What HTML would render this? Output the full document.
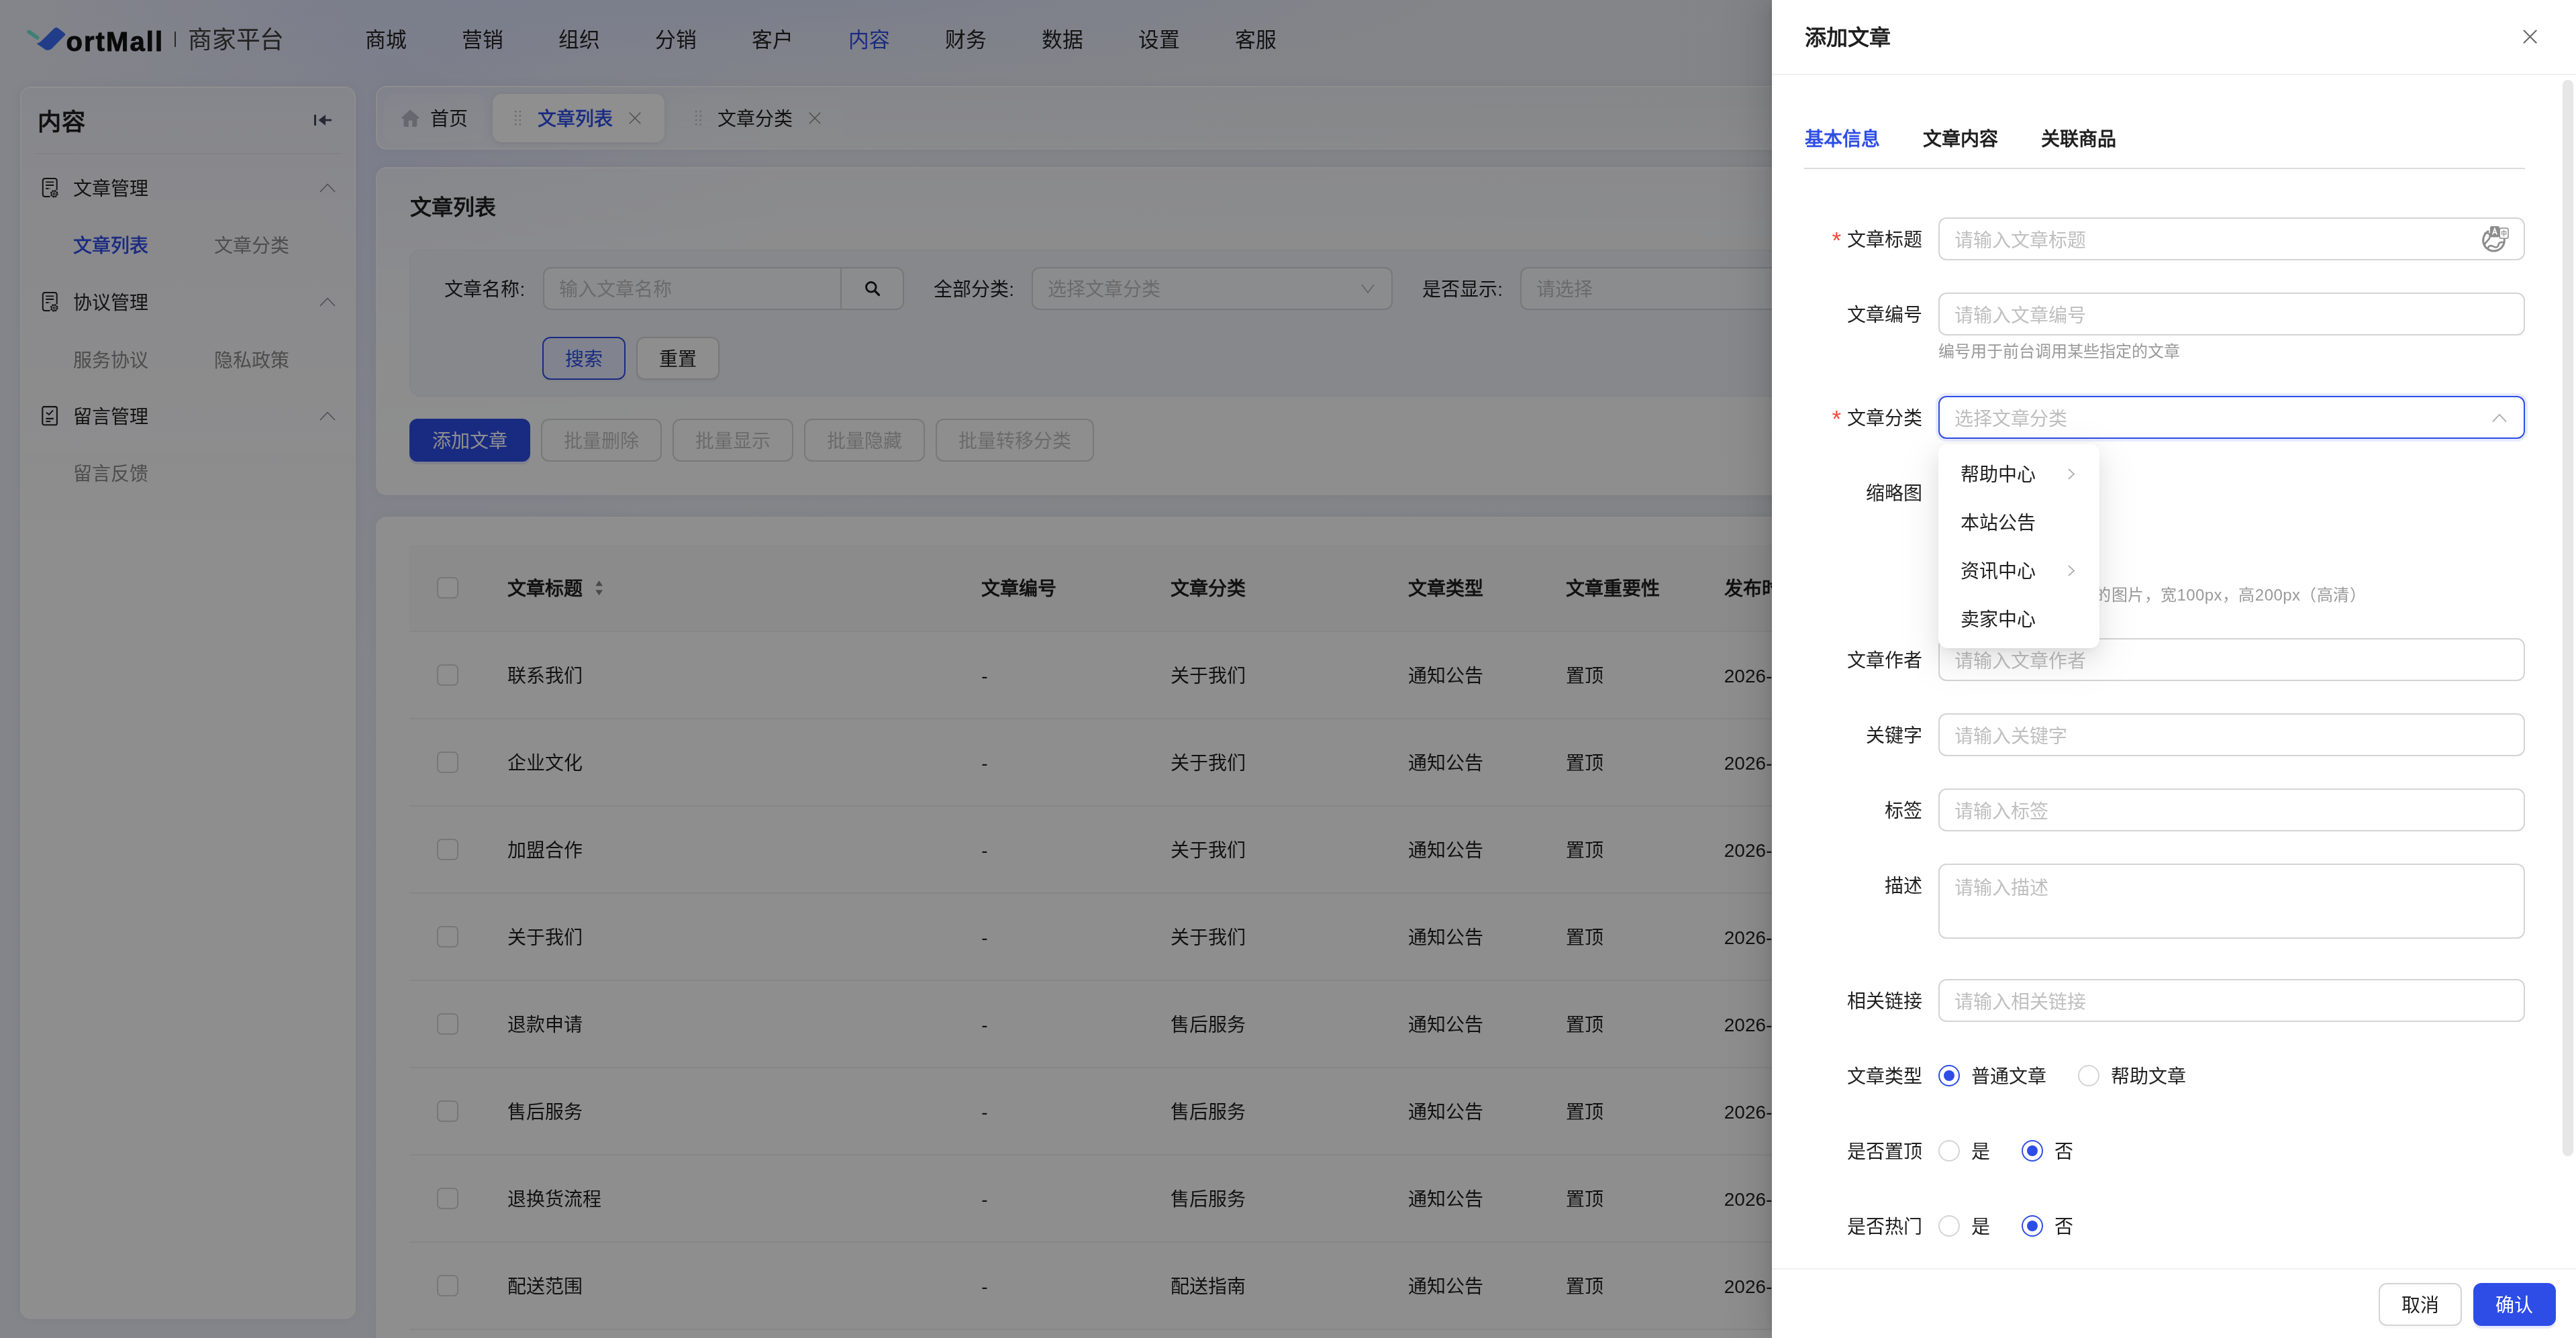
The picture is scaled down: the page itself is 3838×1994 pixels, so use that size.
<!DOCTYPE html>
<html lang="zh-CN"><head><meta charset="utf-8"><title>文章列表 - 商家平台</title>
<style>
html,body{margin:0;padding:0;}
body{width:3838px;height:1994px;overflow:hidden;background:#eceef6;}
#root{position:relative;width:1919px;height:997px;zoom:2;overflow:hidden;will-change:transform;
  font-family:"Liberation Sans",sans-serif;font-size:14px;color:#1f1f1f;
  background:
   radial-gradient(ellipse 560px 95px at 560px -18px, rgba(204,216,252,.62) 0%, rgba(210,220,252,.32) 55%, rgba(214,224,255,0) 100%),
   radial-gradient(ellipse 300px 385px at 290px 110px, rgba(206,216,250,.50) 0%, rgba(212,221,250,.24) 55%, rgba(214,224,255,0) 100%),
   linear-gradient(90deg,#ecedf7 0%,#ebedf5 38%,#e9ebee 100%);}
.t{position:absolute;white-space:nowrap;display:block;}
i{display:inline-block;width:1em;text-align:center;font-style:normal;letter-spacing:0;}
.ls i{margin-right:.22px;}
.b{position:absolute;box-sizing:border-box;}
svg{position:absolute;overflow:visible;}
.card{border-radius:8px;border:1px solid rgba(255,255,255,.72);box-shadow:0 0 9px rgba(20,30,70,.055);}
.inp{background:rgba(255,255,255,.5);border:1px solid #d6d6d6;border-radius:6px;}
.btn{border:1px solid #d6d6d6;border-radius:6px;background:rgba(255,255,255,.92);text-align:center;line-height:32px;font-size:14px;box-shadow:0 2px 0 rgba(0,0,0,.02);}
.btn.dis{color:#bfbfbf;background:transparent;box-shadow:none;}
.btn.pri{background:#2e4de6;border-color:#2e4de6;color:#fff;box-shadow:0 2px 0 rgba(46,77,230,.12);}
.cb{position:absolute;box-sizing:border-box;width:16px;height:16px;border:1px solid #d4d4d4;border-radius:3.5px;background:rgba(255,255,255,.9);}
.row{position:absolute;left:305px;right:0;height:1px;background:#efefef;}
#mask{position:absolute;left:0;top:0;width:1919px;height:997px;background:rgba(0,0,0,.44);}
#drawer{position:absolute;left:1320px;top:0;width:599px;height:997px;background:#fff;
  box-shadow:-6px 0 16px 0 rgba(0,0,0,.08),-3px 0 6px -4px rgba(0,0,0,.12),-9px 0 28px 8px rgba(0,0,0,.05);}
.di{position:absolute;box-sizing:border-box;left:124px;width:437px;height:32px;border:1px solid #d4d4d4;border-radius:6px;background:#fff;}
.ph{position:absolute;left:11px;top:1.25px;line-height:30px;font-size:14px;color:#bfbfbf;white-space:nowrap;}
.lb{position:absolute;right:487.1px;white-space:nowrap;line-height:32px;margin-top:1.2px;font-size:14px;color:#1f1f1f;}
.req{color:#f5483b;margin-right:3.4px;font-family:"Liberation Sans",sans-serif;font-size:17.5px;line-height:0;position:relative;top:1.2px;left:-1px;}
.rd{position:absolute;box-sizing:border-box;width:16px;height:16px;border-radius:50%;border:1px solid #d4d4d4;background:#fff;}
.rd.on{border-color:#2e4de6;}
.rd.on::after{content:"";position:absolute;left:3px;top:3px;width:8px;height:8px;border-radius:50%;background:#2e4de6;}
</style></head><body><div id="root">

<!-- header -->
<svg style="left:19.5px;top:20px" width="30" height="18" viewBox="0 0 60 36">
<path d="M4 7.4 L16.6 16.2" stroke="#70e2d2" stroke-width="5.7" stroke-linecap="round" fill="none"/>
<path d="M15.5 25 C18.5 24.2 21 22.8 23.2 20.6 L41.5 2.6 C43.5 0.7 45.8 0.5 47.8 2 L57 9.2 C58.6 10.4 58.7 11.8 57.4 13.1 L38.6 32 C35.4 35.2 31 35.6 27.6 33.2 Z" fill="#3b6ef5"/>
</svg>
<span class="t" style="left:49.2px;top:19.20px;line-height:24px;font-size:20px;color:#111;font-weight:700;letter-spacing:1.05px;-webkit-text-stroke:.45px #111;">ortMall</span>
<div class="b" style="left:130px;top:23.6px;width:1px;height:11.4px;background:#4a4a4a;"></div>
<span class="t" style="left:140.0px;top:18.10px;line-height:24px;font-size:17.9px;color:#3c3c3c;font-weight:400;"><i>商</i><i>家</i><i>平</i><i>台</i></span>
<span class="t" style="left:272.2px;top:18.00px;line-height:24px;font-size:15.4px;color:#222;font-weight:400;"><i>商</i><i>城</i></span>
<span class="t" style="left:344.2px;top:18.00px;line-height:24px;font-size:15.4px;color:#222;font-weight:400;"><i>营</i><i>销</i></span>
<span class="t" style="left:416.2px;top:18.00px;line-height:24px;font-size:15.4px;color:#222;font-weight:400;"><i>组</i><i>织</i></span>
<span class="t" style="left:488.2px;top:18.00px;line-height:24px;font-size:15.4px;color:#222;font-weight:400;"><i>分</i><i>销</i></span>
<span class="t" style="left:560.2px;top:18.00px;line-height:24px;font-size:15.4px;color:#222;font-weight:400;"><i>客</i><i>户</i></span>
<span class="t" style="left:632.2px;top:18.00px;line-height:24px;font-size:15.4px;color:#2e4de6;font-weight:400;"><i>内</i><i>容</i></span>
<span class="t" style="left:704.2px;top:18.00px;line-height:24px;font-size:15.4px;color:#222;font-weight:400;"><i>财</i><i>务</i></span>
<span class="t" style="left:776.2px;top:18.00px;line-height:24px;font-size:15.4px;color:#222;font-weight:400;"><i>数</i><i>据</i></span>
<span class="t" style="left:848.2px;top:18.00px;line-height:24px;font-size:15.4px;color:#222;font-weight:400;"><i>设</i><i>置</i></span>
<span class="t" style="left:920.2px;top:18.00px;line-height:24px;font-size:15.4px;color:#222;font-weight:400;"><i>客</i><i>服</i></span>
<!-- sidebar -->
<div class="b card" style="left:15px;top:64.5px;width:250px;height:918.5px;background:linear-gradient(180deg,rgba(237,239,250,.94) 0%,rgba(243,243,250,.94) 5.5%,rgba(246,246,250,.94) 9.3%,rgba(250,250,252,.94) 25.6%,rgba(255,255,255,.95) 42%,rgba(255,255,255,.95) 100%);"></div>
<span class="t" style="left:28.2px;top:77.90px;line-height:26px;font-size:17.6px;color:#1f1f1f;font-weight:700;"><i>内</i><i>容</i></span>
<svg style="left:233.5px;top:81.5px" width="14" height="16" viewBox="0 0 28 32">
<rect x="1" y="8" width="3" height="16" fill="#44465a"/>
<path d="M7.5 16 L18 8 L18 24 Z" fill="#44465a"/><rect x="16" y="14.6" width="11" height="2.8" fill="#44465a"/></svg>
<div class="b" style="left:26px;top:114px;width:228px;height:1px;background:rgba(0,0,0,.045);"></div>
<svg style="left:31px;top:132.5px" width="13" height="15" viewBox="0 0 26 30">
<path d="M22.7 17.6 V4.6 Q22.7 1.1 19.2 1.1 H5.3 Q1.8 1.1 1.8 4.6 V24.4 Q1.8 27.9 5.3 27.9 H11.7" fill="none" stroke="#222" stroke-width="2" stroke-linecap="round"/>
<path d="M6.2 6.4 H18.3 M6.2 11 H18.3 M6.2 16 H10.6 M12.2 16 H12.9" stroke="#222" stroke-width="1.9" stroke-linecap="butt"/>
<circle cx="18.7" cy="23.8" r="5.2" fill="none" stroke="#222" stroke-width="1.5" stroke-dasharray="2.3 1.78"/>
<circle cx="18.7" cy="23.8" r="4" fill="none" stroke="#222" stroke-width="1.5"/>
<circle cx="18.7" cy="23.8" r="1.5" fill="none" stroke="#222" stroke-width="1.2"/></svg>
<span class="t" style="left:54.4px;top:130.00px;line-height:22px;font-size:14px;color:#222;font-weight:400;"><i>文</i><i>章</i><i>管</i><i>理</i></span>
<svg style="left:238px;top:136.7px" width="12" height="7" viewBox="0 0 24 14">
<path d="M1 13 L12 1.5 L23 13" fill="none" stroke="#858795" stroke-width="1.5" stroke-linejoin="miter"/></svg>
<span class="t" style="left:54.4px;top:172.50px;line-height:22px;font-size:14px;color:#2e4de6;font-weight:400;-webkit-text-stroke:.35px #2e4de6;"><i>文</i><i>章</i><i>列</i><i>表</i></span>
<span class="t" style="left:159.4px;top:172.50px;line-height:22px;font-size:14px;color:#8a8a8a;font-weight:400;"><i>文</i><i>章</i><i>分</i><i>类</i></span>
<svg style="left:31px;top:217.5px" width="13" height="15" viewBox="0 0 26 30">
<path d="M22.7 17.6 V4.6 Q22.7 1.1 19.2 1.1 H5.3 Q1.8 1.1 1.8 4.6 V24.4 Q1.8 27.9 5.3 27.9 H11.7" fill="none" stroke="#222" stroke-width="2" stroke-linecap="round"/>
<path d="M6.2 6.4 H18.3 M6.2 11 H18.3 M6.2 16 H10.6 M12.2 16 H12.9" stroke="#222" stroke-width="1.9" stroke-linecap="butt"/>
<circle cx="18.7" cy="23.8" r="5.2" fill="none" stroke="#222" stroke-width="1.5" stroke-dasharray="2.3 1.78"/>
<circle cx="18.7" cy="23.8" r="4" fill="none" stroke="#222" stroke-width="1.5"/>
<circle cx="18.7" cy="23.8" r="1.5" fill="none" stroke="#222" stroke-width="1.2"/></svg>
<span class="t" style="left:54.4px;top:215.00px;line-height:22px;font-size:14px;color:#222;font-weight:400;"><i>协</i><i>议</i><i>管</i><i>理</i></span>
<svg style="left:238px;top:221.7px" width="12" height="7" viewBox="0 0 24 14">
<path d="M1 13 L12 1.5 L23 13" fill="none" stroke="#858795" stroke-width="1.5" stroke-linejoin="miter"/></svg>
<span class="t" style="left:54.4px;top:257.75px;line-height:22px;font-size:14px;color:#8a8a8a;font-weight:400;"><i>服</i><i>务</i><i>协</i><i>议</i></span>
<span class="t" style="left:159.4px;top:257.75px;line-height:22px;font-size:14px;color:#8a8a8a;font-weight:400;"><i>隐</i><i>私</i><i>政</i><i>策</i></span>
<svg style="left:31px;top:302.5px" width="13" height="15" viewBox="0 0 26 30">
<rect x="1.3" y="1.1" width="21.6" height="27.2" rx="2.6" fill="none" stroke="#222" stroke-width="2.1"/>
<path d="M7 9.8 L10.9 13 L17.1 6.4" fill="none" stroke="#222" stroke-width="2" stroke-linecap="butt" stroke-linejoin="miter"/>
<path d="M6.4 18.9 H17.9 M6.4 23 H13.2" stroke="#222" stroke-width="2.1" stroke-linecap="butt"/></svg>
<span class="t" style="left:54.4px;top:300.00px;line-height:22px;font-size:14px;color:#222;font-weight:400;"><i>留</i><i>言</i><i>管</i><i>理</i></span>
<svg style="left:238px;top:306.7px" width="12" height="7" viewBox="0 0 24 14">
<path d="M1 13 L12 1.5 L23 13" fill="none" stroke="#858795" stroke-width="1.5" stroke-linejoin="miter"/></svg>
<span class="t" style="left:54.4px;top:342.50px;line-height:22px;font-size:14px;color:#8a8a8a;font-weight:400;"><i>留</i><i>言</i><i>反</i><i>馈</i></span>
<!-- tab bar -->
<div class="b card" style="left:280px;top:64.2px;width:1624px;height:47.5px;background:linear-gradient(180deg,rgba(255,255,255,.20) 0%,rgba(255,255,255,.52) 100%);"></div>
<div class="b" style="left:285.9px;top:70.2px;width:75.1px;height:35.8px;border-radius:7px;background:rgba(255,255,255,.22);"></div>
<div class="b" style="left:367.1px;top:70.2px;width:128px;height:35.8px;border-radius:7px;background:rgba(255,255,255,.96);box-shadow:0 1px 4px rgba(40,50,90,.10);"></div>
<div class="b" style="left:501.1px;top:70.2px;width:127.7px;height:35.8px;border-radius:7px;background:rgba(255,255,255,.10);"></div>
<svg style="left:298.8px;top:81.3px" width="13.4" height="13" viewBox="0 0 27 26">
<path d="M13.4 0.4 L0.9 11.4 Q-0.2 12.6 0.6 13.5 Q1.1 14 2 14 H3.5 V24.2 Q3.5 26.2 5.5 26.2 H10.8 V16.5 H16.3 V26.2 H21.4 Q23.4 26.2 23.4 24.2 V14 H24.9 Q25.8 14 26.3 13.5 Q27.1 12.6 26 11.4 Z" fill="#b8bac6"/></svg>
<span class="t" style="left:320.3px;top:78.20px;line-height:22px;font-size:14px;color:#222;font-weight:400;"><i>首</i><i>页</i></span>
<svg style="left:383.7px;top:82.5px" width="5" height="11" viewBox="0 0 10 22">
<g fill="#bcbec8"><rect x="0" y="0" width="2.4" height="2.4"/><rect x="6.6" y="0" width="2.4" height="2.4"/><rect x="0" y="6.4" width="2.4" height="2.4"/><rect x="6.6" y="6.4" width="2.4" height="2.4"/><rect x="0" y="12.8" width="2.4" height="2.4"/><rect x="6.6" y="12.8" width="2.4" height="2.4"/><rect x="0" y="19.2" width="2.4" height="2.4"/><rect x="6.6" y="19.2" width="2.4" height="2.4"/></g></svg>
<span class="t" style="left:400.3px;top:78.20px;line-height:22px;font-size:14px;color:#2e4de6;font-weight:400;-webkit-text-stroke:.35px #2e4de6;"><i>文</i><i>章</i><i>列</i><i>表</i></span>
<svg style="left:468.6px;top:83.7px" width="9" height="9" viewBox="0 0 18 18">
<path d="M0.8 0.8 L17.2 17.2 M17.2 0.8 L0.8 17.2" stroke="#888" stroke-width="1.4" fill="none"/></svg>
<svg style="left:517.8px;top:82.5px" width="5" height="11" viewBox="0 0 10 22">
<g fill="#bcbec8"><rect x="0" y="0" width="2.4" height="2.4"/><rect x="6.6" y="0" width="2.4" height="2.4"/><rect x="0" y="6.4" width="2.4" height="2.4"/><rect x="6.6" y="6.4" width="2.4" height="2.4"/><rect x="0" y="12.8" width="2.4" height="2.4"/><rect x="6.6" y="12.8" width="2.4" height="2.4"/><rect x="0" y="19.2" width="2.4" height="2.4"/><rect x="6.6" y="19.2" width="2.4" height="2.4"/></g></svg>
<span class="t" style="left:534.4px;top:78.20px;line-height:22px;font-size:14px;color:#222;font-weight:400;"><i>文</i><i>章</i><i>分</i><i>类</i></span>
<svg style="left:602.5px;top:83.7px" width="9" height="9" viewBox="0 0 18 18">
<path d="M0.8 0.8 L17.2 17.2 M17.2 0.8 L0.8 17.2" stroke="#888" stroke-width="1.4" fill="none"/></svg>
<!-- filter card -->
<div class="b card" style="left:280px;top:124.3px;width:1624px;height:244.8px;background:linear-gradient(180deg,rgba(255,255,255,.56) 0%,rgba(255,255,255,.80) 40%,rgba(255,255,255,.93) 100%);"></div>
<span class="t" style="left:305.5px;top:142.30px;line-height:24px;font-size:16px;color:#1f1f1f;font-weight:700;"><i>文</i><i>章</i><i>列</i><i>表</i></span>
<div class="b" style="left:305px;top:186.2px;width:1574px;height:109.5px;border-radius:8px;background:rgba(239,241,250,.92);border:1px solid rgba(0,0,0,.018);"></div>
<span class="t" style="left:331.2px;top:205.00px;line-height:22px;font-size:14px;color:#1f1f1f;font-weight:400;"><i>文</i><i>章</i><i>名</i><i>称</i>:</span>
<div class="b inp" style="left:404.3px;top:199.1px;width:269.2px;height:32px;"></div>
<div class="b" style="left:626px;top:199.6px;width:1px;height:31px;background:#d6d6d6;"></div>
<span class="t" style="left:416.3px;top:205.00px;line-height:22px;font-size:14px;color:#bfbfbf;font-weight:400;"><i>输</i><i>入</i><i>文</i><i>章</i><i>名</i><i>称</i></span>
<svg style="left:643.9px;top:209.2px" width="11.8" height="11.8" viewBox="0 0 30 30">
<circle cx="12.5" cy="12.5" r="9.3" fill="none" stroke="#1a1a1a" stroke-width="3.6"/><path d="M19.5 19.5 L27.3 27.3" stroke="#1a1a1a" stroke-width="4.2" stroke-linecap="round"/></svg>
<span class="t" style="left:695.6px;top:205.00px;line-height:22px;font-size:14px;color:#1f1f1f;font-weight:400;"><i>全</i><i>部</i><i>分</i><i>类</i>:</span>
<div class="b inp" style="left:768.3px;top:199.1px;width:269.4px;height:32px;"></div>
<span class="t" style="left:780.3px;top:205.00px;line-height:22px;font-size:14px;color:#bfbfbf;font-weight:400;"><i>选</i><i>择</i><i>文</i><i>章</i><i>分</i><i>类</i></span>
<svg style="left:1014.1px;top:211.4px" width="10" height="7" viewBox="0 0 20 14">
<path d="M0.8 1 L10 13 L19.2 1" fill="none" stroke="#b4b4b4" stroke-width="1.7"/></svg>
<span class="t" style="left:1059.6px;top:205.00px;line-height:22px;font-size:14px;color:#1f1f1f;font-weight:400;"><i>是</i><i>否</i><i>显</i><i>示</i>:</span>
<div class="b inp" style="left:1132.5px;top:199.1px;width:269.4px;height:32px;"></div>
<span class="t" style="left:1144.5px;top:205.00px;line-height:22px;font-size:14px;color:#bfbfbf;font-weight:400;"><i>请</i><i>选</i><i>择</i></span>
<div class="b btn" style="left:404px;top:251.2px;width:62px;height:32px;color:#2e4de6;border-color:#2e4de6;background:#e6eaff;"><i>搜</i><i>索</i></div>
<div class="b btn" style="left:474.1px;top:251.2px;width:62px;height:32px;"><i>重</i><i>置</i></div>
<div class="b btn pri" style="left:305px;top:312px;width:90px;height:32px;"><i>添</i><i>加</i><i>文</i><i>章</i></div>
<div class="b btn dis" style="left:403.2px;top:312px;width:90px;height:32px;"><i>批</i><i>量</i><i>删</i><i>除</i></div>
<div class="b btn dis" style="left:501.2px;top:312px;width:90px;height:32px;"><i>批</i><i>量</i><i>显</i><i>示</i></div>
<div class="b btn dis" style="left:599.2px;top:312px;width:90px;height:32px;"><i>批</i><i>量</i><i>隐</i><i>藏</i></div>
<div class="b btn dis" style="left:697.2px;top:312px;width:118px;height:32px;"><i>批</i><i>量</i><i>转</i><i>移</i><i>分</i><i>类</i></div>
<!-- table card -->
<div class="b card" style="left:280px;top:385px;width:1624px;height:640px;background:rgba(255,255,255,.94);"></div>
<div class="b" style="left:305px;top:406px;width:1574px;height:64.4px;background:rgba(0,0,0,.022);"></div>
<div class="cb" style="left:325.4px;top:430px;"></div>
<span class="t" style="left:377.8px;top:428.00px;line-height:22px;font-size:14px;color:#1f1f1f;font-weight:700;"><i>文</i><i>章</i><i>标</i><i>题</i></span>
<span class="t" style="left:731.1px;top:428.00px;line-height:22px;font-size:14px;color:#1f1f1f;font-weight:700;"><i>文</i><i>章</i><i>编</i><i>号</i></span>
<span class="t" style="left:872.2px;top:428.00px;line-height:22px;font-size:14px;color:#1f1f1f;font-weight:700;"><i>文</i><i>章</i><i>分</i><i>类</i></span>
<span class="t" style="left:1048.9px;top:428.00px;line-height:22px;font-size:14px;color:#1f1f1f;font-weight:700;"><i>文</i><i>章</i><i>类</i><i>型</i></span>
<span class="t" style="left:1166.6px;top:428.00px;line-height:22px;font-size:14px;color:#1f1f1f;font-weight:700;"><i>文</i><i>章</i><i>重</i><i>要</i><i>性</i></span>
<span class="t" style="left:1284.4px;top:428.00px;line-height:22px;font-size:14px;color:#1f1f1f;font-weight:700;"><i>发</i><i>布</i><i>时</i><i>间</i></span>
<svg style="left:442.5px;top:432.3px" width="7.6" height="11.2" viewBox="0 0 12 23">
<path d="M6 0.3 L11.5 8.4 H0.5 Z M6 22.8 L11.5 14.6 H0.5 Z" fill="#828282"/></svg>
<div class="row" style="top:469.90px"></div>
<div class="cb" style="left:325.4px;top:495px;"></div>
<span class="t" style="left:377.8px;top:493.00px;line-height:22px;font-size:14px;color:#1f1f1f;font-weight:400;"><i>联</i><i>系</i><i>我</i><i>们</i></span>
<span class="t" style="left:731.1px;top:493.00px;line-height:22px;font-size:14px;color:#1f1f1f;font-weight:400;">-</span>
<span class="t" style="left:872.2px;top:493.00px;line-height:22px;font-size:14px;color:#1f1f1f;font-weight:400;"><i>关</i><i>于</i><i>我</i><i>们</i></span>
<span class="t" style="left:1048.9px;top:493.00px;line-height:22px;font-size:14px;color:#1f1f1f;font-weight:400;"><i>通</i><i>知</i><i>公</i><i>告</i></span>
<span class="t" style="left:1166.6px;top:493.00px;line-height:22px;font-size:14px;color:#1f1f1f;font-weight:400;"><i>置</i><i>顶</i></span>
<span class="t" style="left:1284.4px;top:493.00px;line-height:22px;font-size:14px;color:#1f1f1f;font-weight:400;">2026-01-12 10:00:00</span>
<div class="row" style="top:534.90px"></div>
<div class="cb" style="left:325.4px;top:560px;"></div>
<span class="t" style="left:377.8px;top:558.00px;line-height:22px;font-size:14px;color:#1f1f1f;font-weight:400;"><i>企</i><i>业</i><i>文</i><i>化</i></span>
<span class="t" style="left:731.1px;top:558.00px;line-height:22px;font-size:14px;color:#1f1f1f;font-weight:400;">-</span>
<span class="t" style="left:872.2px;top:558.00px;line-height:22px;font-size:14px;color:#1f1f1f;font-weight:400;"><i>关</i><i>于</i><i>我</i><i>们</i></span>
<span class="t" style="left:1048.9px;top:558.00px;line-height:22px;font-size:14px;color:#1f1f1f;font-weight:400;"><i>通</i><i>知</i><i>公</i><i>告</i></span>
<span class="t" style="left:1166.6px;top:558.00px;line-height:22px;font-size:14px;color:#1f1f1f;font-weight:400;"><i>置</i><i>顶</i></span>
<span class="t" style="left:1284.4px;top:558.00px;line-height:22px;font-size:14px;color:#1f1f1f;font-weight:400;">2026-01-12 10:00:00</span>
<div class="row" style="top:599.90px"></div>
<div class="cb" style="left:325.4px;top:625px;"></div>
<span class="t" style="left:377.8px;top:623.00px;line-height:22px;font-size:14px;color:#1f1f1f;font-weight:400;"><i>加</i><i>盟</i><i>合</i><i>作</i></span>
<span class="t" style="left:731.1px;top:623.00px;line-height:22px;font-size:14px;color:#1f1f1f;font-weight:400;">-</span>
<span class="t" style="left:872.2px;top:623.00px;line-height:22px;font-size:14px;color:#1f1f1f;font-weight:400;"><i>关</i><i>于</i><i>我</i><i>们</i></span>
<span class="t" style="left:1048.9px;top:623.00px;line-height:22px;font-size:14px;color:#1f1f1f;font-weight:400;"><i>通</i><i>知</i><i>公</i><i>告</i></span>
<span class="t" style="left:1166.6px;top:623.00px;line-height:22px;font-size:14px;color:#1f1f1f;font-weight:400;"><i>置</i><i>顶</i></span>
<span class="t" style="left:1284.4px;top:623.00px;line-height:22px;font-size:14px;color:#1f1f1f;font-weight:400;">2026-01-12 10:00:00</span>
<div class="row" style="top:664.90px"></div>
<div class="cb" style="left:325.4px;top:690px;"></div>
<span class="t" style="left:377.8px;top:688.00px;line-height:22px;font-size:14px;color:#1f1f1f;font-weight:400;"><i>关</i><i>于</i><i>我</i><i>们</i></span>
<span class="t" style="left:731.1px;top:688.00px;line-height:22px;font-size:14px;color:#1f1f1f;font-weight:400;">-</span>
<span class="t" style="left:872.2px;top:688.00px;line-height:22px;font-size:14px;color:#1f1f1f;font-weight:400;"><i>关</i><i>于</i><i>我</i><i>们</i></span>
<span class="t" style="left:1048.9px;top:688.00px;line-height:22px;font-size:14px;color:#1f1f1f;font-weight:400;"><i>通</i><i>知</i><i>公</i><i>告</i></span>
<span class="t" style="left:1166.6px;top:688.00px;line-height:22px;font-size:14px;color:#1f1f1f;font-weight:400;"><i>置</i><i>顶</i></span>
<span class="t" style="left:1284.4px;top:688.00px;line-height:22px;font-size:14px;color:#1f1f1f;font-weight:400;">2026-01-12 10:00:00</span>
<div class="row" style="top:729.90px"></div>
<div class="cb" style="left:325.4px;top:755px;"></div>
<span class="t" style="left:377.8px;top:753.00px;line-height:22px;font-size:14px;color:#1f1f1f;font-weight:400;"><i>退</i><i>款</i><i>申</i><i>请</i></span>
<span class="t" style="left:731.1px;top:753.00px;line-height:22px;font-size:14px;color:#1f1f1f;font-weight:400;">-</span>
<span class="t" style="left:872.2px;top:753.00px;line-height:22px;font-size:14px;color:#1f1f1f;font-weight:400;"><i>售</i><i>后</i><i>服</i><i>务</i></span>
<span class="t" style="left:1048.9px;top:753.00px;line-height:22px;font-size:14px;color:#1f1f1f;font-weight:400;"><i>通</i><i>知</i><i>公</i><i>告</i></span>
<span class="t" style="left:1166.6px;top:753.00px;line-height:22px;font-size:14px;color:#1f1f1f;font-weight:400;"><i>置</i><i>顶</i></span>
<span class="t" style="left:1284.4px;top:753.00px;line-height:22px;font-size:14px;color:#1f1f1f;font-weight:400;">2026-01-12 10:00:00</span>
<div class="row" style="top:794.90px"></div>
<div class="cb" style="left:325.4px;top:820px;"></div>
<span class="t" style="left:377.8px;top:818.00px;line-height:22px;font-size:14px;color:#1f1f1f;font-weight:400;"><i>售</i><i>后</i><i>服</i><i>务</i></span>
<span class="t" style="left:731.1px;top:818.00px;line-height:22px;font-size:14px;color:#1f1f1f;font-weight:400;">-</span>
<span class="t" style="left:872.2px;top:818.00px;line-height:22px;font-size:14px;color:#1f1f1f;font-weight:400;"><i>售</i><i>后</i><i>服</i><i>务</i></span>
<span class="t" style="left:1048.9px;top:818.00px;line-height:22px;font-size:14px;color:#1f1f1f;font-weight:400;"><i>通</i><i>知</i><i>公</i><i>告</i></span>
<span class="t" style="left:1166.6px;top:818.00px;line-height:22px;font-size:14px;color:#1f1f1f;font-weight:400;"><i>置</i><i>顶</i></span>
<span class="t" style="left:1284.4px;top:818.00px;line-height:22px;font-size:14px;color:#1f1f1f;font-weight:400;">2026-01-12 10:00:00</span>
<div class="row" style="top:859.90px"></div>
<div class="cb" style="left:325.4px;top:885px;"></div>
<span class="t" style="left:377.8px;top:883.00px;line-height:22px;font-size:14px;color:#1f1f1f;font-weight:400;"><i>退</i><i>换</i><i>货</i><i>流</i><i>程</i></span>
<span class="t" style="left:731.1px;top:883.00px;line-height:22px;font-size:14px;color:#1f1f1f;font-weight:400;">-</span>
<span class="t" style="left:872.2px;top:883.00px;line-height:22px;font-size:14px;color:#1f1f1f;font-weight:400;"><i>售</i><i>后</i><i>服</i><i>务</i></span>
<span class="t" style="left:1048.9px;top:883.00px;line-height:22px;font-size:14px;color:#1f1f1f;font-weight:400;"><i>通</i><i>知</i><i>公</i><i>告</i></span>
<span class="t" style="left:1166.6px;top:883.00px;line-height:22px;font-size:14px;color:#1f1f1f;font-weight:400;"><i>置</i><i>顶</i></span>
<span class="t" style="left:1284.4px;top:883.00px;line-height:22px;font-size:14px;color:#1f1f1f;font-weight:400;">2026-01-12 10:00:00</span>
<div class="row" style="top:924.90px"></div>
<div class="cb" style="left:325.4px;top:950px;"></div>
<span class="t" style="left:377.8px;top:948.00px;line-height:22px;font-size:14px;color:#1f1f1f;font-weight:400;"><i>配</i><i>送</i><i>范</i><i>围</i></span>
<span class="t" style="left:731.1px;top:948.00px;line-height:22px;font-size:14px;color:#1f1f1f;font-weight:400;">-</span>
<span class="t" style="left:872.2px;top:948.00px;line-height:22px;font-size:14px;color:#1f1f1f;font-weight:400;"><i>配</i><i>送</i><i>指</i><i>南</i></span>
<span class="t" style="left:1048.9px;top:948.00px;line-height:22px;font-size:14px;color:#1f1f1f;font-weight:400;"><i>通</i><i>知</i><i>公</i><i>告</i></span>
<span class="t" style="left:1166.6px;top:948.00px;line-height:22px;font-size:14px;color:#1f1f1f;font-weight:400;"><i>置</i><i>顶</i></span>
<span class="t" style="left:1284.4px;top:948.00px;line-height:22px;font-size:14px;color:#1f1f1f;font-weight:400;">2026-01-12 10:00:00</span>
<div class="row" style="top:989.90px"></div>
<div id="mask"></div>
<div id="drawer">
<span class="t" style="left:24.4px;top:15.90px;line-height:24px;font-size:16px;color:#1f1f1f;font-weight:700;"><i>添</i><i>加</i><i>文</i><i>章</i></span>
<svg style="left:559.7px;top:21.9px" width="10.6" height="10.6" viewBox="0 0 21 21">
<path d="M1 1 L20 20 M20 1 L1 20" stroke="#666" stroke-width="2" fill="none"/></svg>
<div class="b" style="left:0px;top:55px;width:599px;height:1px;background:#f0f0f0;"></div>
<div class="b" style="left:589px;top:59.3px;width:8px;height:802.3px;background:#e6e6e6;border-radius:4px;"></div>
<span class="t" style="left:24.4px;top:93.00px;line-height:22px;font-size:14px;color:#2e4de6;font-weight:700;"><i>基</i><i>本</i><i>信</i><i>息</i></span>
<span class="t" style="left:112.4px;top:93.00px;line-height:22px;font-size:14px;color:#1f1f1f;font-weight:700;"><i>文</i><i>章</i><i>内</i><i>容</i></span>
<span class="t" style="left:200.4px;top:93.00px;line-height:22px;font-size:14px;color:#1f1f1f;font-weight:700;"><i>关</i><i>联</i><i>商</i><i>品</i></span>
<div class="b" style="left:24px;top:125px;width:537px;height:1px;background:#dcdcdc;"></div>
<div class="lb" style="top:162px"><span class="req">*</span><i>文</i><i>章</i><i>标</i><i>题</i></div>
<div class="di" style="top:162px;height:32px;"><span class="ph"><i>请</i><i>输</i><i>入</i><i>文</i><i>章</i><i>标</i><i>题</i></span></div>
<svg style="left:528px;top:168px" width="22" height="20" viewBox="0 0 44 40">
<path d="M11.1 8.8 A15.8 15.8 0 1 0 35.2 20.8" fill="none" stroke="#8c8c8c" stroke-width="3" stroke-linecap="round"/>
<path d="M6.5 11.8 C11.8 10 14.6 13 13.6 17.6 C12.8 21.8 7.6 23.8 6 28.4" fill="none" stroke="#8c8c8c" stroke-width="2.6" stroke-linecap="round"/>
<path d="M11 33.6 C12 29 15.8 29.8 19 31.4 C23.2 33.4 25.8 32.4 26.3 29.2 C26.9 25.2 30 24.6 34.6 25.2" fill="none" stroke="#8c8c8c" stroke-width="2.6" stroke-linecap="round"/>
<rect x="13.9" y="1.1" width="14" height="16.3" rx="2.5" fill="#8c8c8c"/>
<path d="M17.6 13.6 L20.9 4.6 L24.2 13.6 M18.8 10.6 H23" fill="none" stroke="#fff" stroke-width="1.6"/>
<rect x="28.2" y="3.9" width="12.8" height="15.3" rx="2.5" fill="#fff" stroke="#8c8c8c" stroke-width="1.5"/>
<path d="M31.5 9 H37.7 V13 H31.5 Z M34.6 6.5 V16.5" fill="none" stroke="#8c8c8c" stroke-width="1.1"/></svg>
<div class="lb" style="top:218px"><i>文</i><i>章</i><i>编</i><i>号</i></div>
<div class="di" style="top:218px;height:32px;"><span class="ph"><i>请</i><i>输</i><i>入</i><i>文</i><i>章</i><i>编</i><i>号</i></span></div>
<span class="t" style="left:124px;top:252.00px;line-height:20px;font-size:12px;color:#999;font-weight:400;"><i>编</i><i>号</i><i>用</i><i>于</i><i>前</i><i>台</i><i>调</i><i>用</i><i>某</i><i>些</i><i>指</i><i>定</i><i>的</i><i>文</i><i>章</i></span>
<div class="lb" style="top:295px"><span class="req">*</span><i>文</i><i>章</i><i>分</i><i>类</i></div>
<div class="di" style="top:295px;border-color:#2e4de6;box-shadow:0 0 0 2px rgba(46,77,230,.11);"><span class="ph"><i>选</i><i>择</i><i>文</i><i>章</i><i>分</i><i>类</i></span></div>
<svg style="left:536.5px;top:308px" width="11" height="7" viewBox="0 0 22 14">
<path d="M1 12.5 L11 1.8 L21 12.5" fill="none" stroke="#b0b0b0" stroke-width="1.9"/></svg>
<div class="lb" style="top:351px"><i>缩</i><i>略</i><i>图</i></div>
<span class="t" style="left:124px;top:433.50px;line-height:20px;font-size:12px;color:#999;font-weight:400;"><i>建</i><i>议</i><i>上</i><i>传</i><i>比</i><i>例</i><i>为</i><i>一</i><i>比</i><i>二</i></span>
<span class="t ls" style="left:240.6px;top:433.50px;line-height:20px;font-size:12px;color:#999;font-weight:400;letter-spacing:.22px;"><i>的</i><i>图</i><i>片</i><i>，</i><i>宽</i>100px<i>，</i><i>高</i>200px<i>（</i><i>高</i><i>清</i><i>）</i></span>
<div class="lb" style="top:475.5px"><i>文</i><i>章</i><i>作</i><i>者</i></div>
<div class="di" style="top:475.5px;height:32px;"><span class="ph"><i>请</i><i>输</i><i>入</i><i>文</i><i>章</i><i>作</i><i>者</i></span></div>
<div class="lb" style="top:531.5px"><i>关</i><i>键</i><i>字</i></div>
<div class="di" style="top:531.5px;height:32px;"><span class="ph"><i>请</i><i>输</i><i>入</i><i>关</i><i>键</i><i>字</i></span></div>
<div class="lb" style="top:587.5px"><i>标</i><i>签</i></div>
<div class="di" style="top:587.5px;height:32px;"><span class="ph"><i>请</i><i>输</i><i>入</i><i>标</i><i>签</i></span></div>
<div class="lb" style="top:643.5px"><i>描</i><i>述</i></div>
<div class="di" style="top:643.5px;height:56px;"><span class="ph" style="top:2.5px"><i>请</i><i>输</i><i>入</i><i>描</i><i>述</i></span></div>
<div class="lb" style="top:729.5px"><i>相</i><i>关</i><i>链</i><i>接</i></div>
<div class="di" style="top:729.5px;height:32px;"><span class="ph"><i>请</i><i>输</i><i>入</i><i>相</i><i>关</i><i>链</i><i>接</i></span></div>
<div class="lb" style="top:785.5px"><i>文</i><i>章</i><i>类</i><i>型</i></div><div class="rd on" style="left:124px;top:793.5px"></div><span class="t" style="left:148.6px;top:791.50px;line-height:22px;font-size:14px;color:#1f1f1f;font-weight:400;"><i>普</i><i>通</i><i>文</i><i>章</i></span><div class="rd" style="left:227.8px;top:793.5px"></div><span class="t" style="left:252.4px;top:791.50px;line-height:22px;font-size:14px;color:#1f1f1f;font-weight:400;"><i>帮</i><i>助</i><i>文</i><i>章</i></span>
<div class="lb" style="top:841.5px"><i>是</i><i>否</i><i>置</i><i>顶</i></div><div class="rd" style="left:124px;top:849.5px"></div><span class="t" style="left:148.6px;top:847.50px;line-height:22px;font-size:14px;color:#1f1f1f;font-weight:400;"><i>是</i></span><div class="rd on" style="left:185.8px;top:849.5px"></div><span class="t" style="left:210.4px;top:847.50px;line-height:22px;font-size:14px;color:#1f1f1f;font-weight:400;"><i>否</i></span>
<div class="lb" style="top:897.5px"><i>是</i><i>否</i><i>热</i><i>门</i></div><div class="rd" style="left:124px;top:905.5px"></div><span class="t" style="left:148.6px;top:903.50px;line-height:22px;font-size:14px;color:#1f1f1f;font-weight:400;"><i>是</i></span><div class="rd on" style="left:185.8px;top:905.5px"></div><span class="t" style="left:210.4px;top:903.50px;line-height:22px;font-size:14px;color:#1f1f1f;font-weight:400;"><i>否</i></span>
<div class="b" style="left:124px;top:331px;width:120px;height:152px;background:#fff;border-radius:7px;
box-shadow:0 6px 16px 0 rgba(0,0,0,.08),0 3px 6px -4px rgba(0,0,0,.12),0 9px 28px 8px rgba(0,0,0,.05);"></div>
<span class="t" style="left:140.4px;top:343.00px;line-height:22px;font-size:14px;color:#1f1f1f;font-weight:400;"><i>帮</i><i>助</i><i>中</i><i>心</i></span>
<svg style="left:220.6px;top:348.8px" width="5.2" height="8.4" viewBox="0 0 10.4 16.8">
<path d="M1 1 L9 8.4 L1 15.8" fill="none" stroke="#a8a8a8" stroke-width="1.7"/></svg>
<span class="t" style="left:140.4px;top:379.00px;line-height:22px;font-size:14px;color:#1f1f1f;font-weight:400;"><i>本</i><i>站</i><i>公</i><i>告</i></span>
<span class="t" style="left:140.4px;top:415.00px;line-height:22px;font-size:14px;color:#1f1f1f;font-weight:400;"><i>资</i><i>讯</i><i>中</i><i>心</i></span>
<svg style="left:220.6px;top:420.8px" width="5.2" height="8.4" viewBox="0 0 10.4 16.8">
<path d="M1 1 L9 8.4 L1 15.8" fill="none" stroke="#a8a8a8" stroke-width="1.7"/></svg>
<span class="t" style="left:140.4px;top:451.00px;line-height:22px;font-size:14px;color:#1f1f1f;font-weight:400;"><i>卖</i><i>家</i><i>中</i><i>心</i></span>
<div class="b" style="left:0px;top:945px;width:599px;height:1px;background:#f0f0f0;"></div>
<div class="b btn" style="left:452.1px;top:956.1px;width:61.7px;height:31.7px;background:#fff;border-color:#d4d4d4;"><i>取</i><i>消</i></div>
<div class="b btn pri" style="left:522.3px;top:956.1px;width:61.7px;height:31.7px;"><i>确</i><i>认</i></div>
</div>
</div></body></html>
